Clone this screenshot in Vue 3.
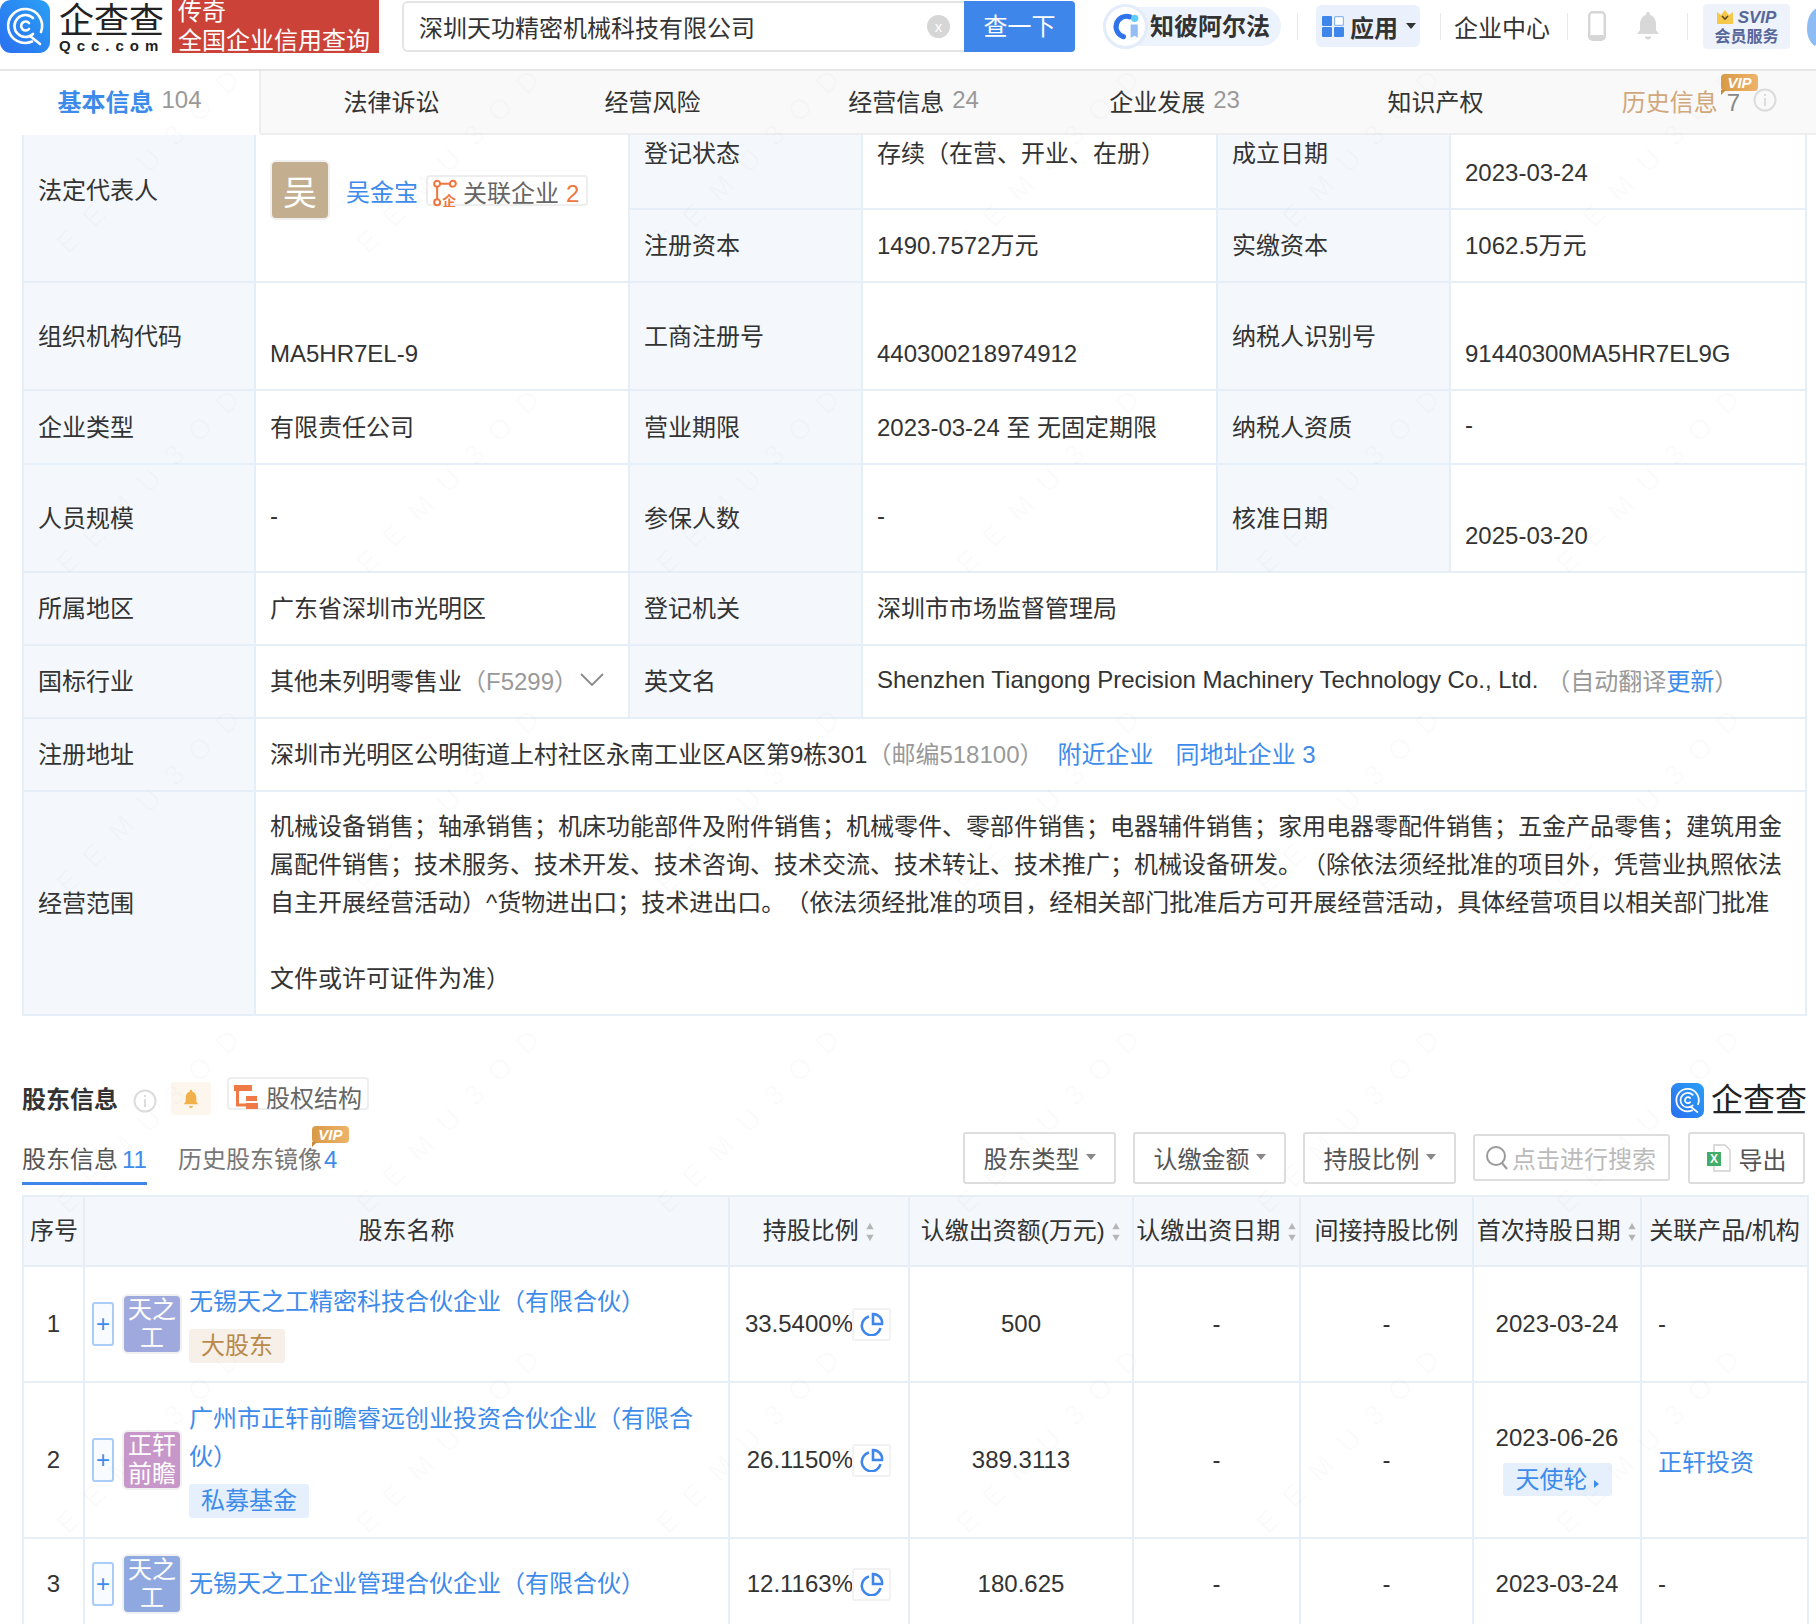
<script setup>
const watermarks = Array.from({ length: 30 }, (_, i) => i)

const tabs = [
  { name: '基本信息', count: '104', active: true },
  { name: '法律诉讼' },
  { name: '经营风险' },
  { name: '经营信息', count: '24' },
  { name: '企业发展', count: '23' },
  { name: '知识产权' }
]

const columns = [
  { title: '序号', cls: 'th-no' },
  { title: '股东名称' },
  { title: '持股比例', sort: true },
  { title: '认缴出资额(万元)', sort: true },
  { title: '认缴出资日期', sort: true },
  { title: '间接持股比例' },
  { title: '首次持股日期', sort: true },
  { title: '关联产品/机构' }
]

const holders = [
  {
    no: 1,
    avatar: ['天之', '工'],
    color: '#a0a9dd',
    name: '无锡天之工精密科技合伙企业（有限合伙）',
    tag: '大股东',
    tagCls: 'tag-gold',
    ratio: '33.5400%',
    amount: '500',
    date: '2023-03-24',
    height: 116
  },
  {
    no: 2,
    avatar: ['正轩', '前瞻'],
    color: '#c897c9',
    name: '广州市正轩前瞻睿远创业投资合伙企业（有限合伙）',
    tag: '私募基金',
    tagCls: 'tag-blue',
    ratio: '26.1150%',
    amount: '389.3113',
    date: '2023-06-26',
    round: '天使轮',
    product: '正轩投资',
    height: 156
  },
  {
    no: 3,
    avatar: ['天之', '工'],
    color: '#90a8e0',
    name: '无锡天之工企业管理合伙企业（有限合伙）',
    ratio: '12.1163%',
    amount: '180.625',
    date: '2023-03-24',
    height: 92
  }
]
</script>

<template>
  <div class="page">
    <header class="top">
      <svg class="logo" viewBox="0 0 50 53">
        <defs>
          <linearGradient id="qccBlue" x1="0" y1="1" x2="1" y2="0">
            <stop offset="0" stop-color="#2a6ff0" />
            <stop offset="1" stop-color="#2aa0f5" />
          </linearGradient>
        </defs>
        <rect width="50" height="53" rx="11" fill="url(#qccBlue)" />
        <g fill="none" stroke="#fff" stroke-width="2.6" stroke-linecap="round">
          <path d="M32 41.5A17 17 0 1 1 41 32" />
          <path d="M30 36L40 44" />
          <path d="M33 18A11 11 0 1 0 33 34" />
          <path d="M29 23A4.5 4.5 0 1 0 29 29" />
        </g>
      </svg>
      <div class="brand">
        <div class="brand-name">企查查</div>
        <div class="brand-en">Qcc.com</div>
      </div>
      <div class="slogan">
        <span>传奇</span>
        <span>全国企业信用查询</span>
      </div>
      <div class="search">
        <div class="search-input">
          <span class="search-text">深圳天功精密机械科技有限公司</span>
          <span class="clear">x</span>
        </div>
        <div class="search-btn">查一下</div>
      </div>
      <div class="alpha">
        <svg class="alpha-icon" viewBox="0 0 44 44">
          <circle cx="22" cy="22" r="20.5" fill="#fff" stroke="#e3ecfb" stroke-width="3" />
          <path d="M26 12.5A10 10 0 1 0 20 32" fill="none" stroke="#2f72ea" stroke-width="5" stroke-linecap="round" />
          <circle cx="31" cy="14" r="3.6" fill="#5ccdf6" />
          <path d="M27 20h7v13l-3-2-4 2z" fill="#93bdf5" />
        </svg>
        <span class="alpha-text">知彼阿尔法</span>
      </div>
      <i class="sep sep-a"></i>
      <div class="apps">
        <svg class="apps-icon" viewBox="0 0 22 21">
          <rect width="10" height="10" rx="1" fill="#3f86ea" />
          <rect x="12.6" y="0.6" width="8.8" height="8.8" rx="1" fill="#fff" stroke="#8db6f2" stroke-width="1.2" />
          <rect y="11" width="10" height="10" rx="1" fill="#3f86ea" />
          <rect x="12" y="11" width="10" height="10" rx="1" fill="#3f86ea" />
        </svg>
        <span class="apps-text">应用</span>
        <i class="caret caret-dark"></i>
      </div>
      <i class="sep sep-b"></i>
      <span class="center-link">企业中心</span>
      <i class="sep sep-c"></i>
      <svg class="phone" viewBox="0 0 18 30">
        <rect x="1.2" y="1.2" width="15.6" height="27.6" rx="3.5" fill="#fff" stroke="#d6d6d6" stroke-width="2.4" />
        <rect x="1" y="24" width="16" height="5" rx="2" fill="#d6d6d6" />
      </svg>
      <svg class="top-bell" viewBox="0 0 24 30">
        <path d="M12 1a2 2 0 0 1 2 2v1c4 1 6 5 6 9v6l3 4H1l3-4v-6c0-4 2-8 6-9V3a2 2 0 0 1 2-2z" fill="#d8d8d8" />
        <path d="M9 25.5a3 3 0 0 0 6 0z" fill="#d8d8d8" />
      </svg>
      <i class="sep sep-d"></i>
      <div class="svip">
        <div class="svip-line">
          <svg class="crown" viewBox="0 0 16 14">
            <path d="M0 2l4 3 4-5 4 5 4-3v12H0z" fill="#f5c84c" />
            <path d="M5 6l3 3 3-3" fill="none" stroke="#5a4a20" stroke-width="1.6" />
          </svg>
          <span>SVIP</span>
        </div>
        <div class="svip-sub">会员服务</div>
      </div>
      <svg class="helper" viewBox="0 0 30 46">
        <path d="M2 26C2 10 10 2 26 2v8c-10 0-15 6-15 16l5 8-6 9c-5-3-8-10-8-17z" fill="#8dbcf5" />
      </svg>
    </header>

    <nav class="tabs">
      <div v-for="tab in tabs" :key="tab.name" class="tab" :class="{ 'tab-on': tab.active }">
        <span class="tab-name">{{ tab.name }}</span>
        <span v-if="tab.count" class="tab-count">{{ tab.count }}</span>
      </div>
      <div class="tab tab-history">
        <span class="tab-name">历史信息</span>
        <span class="tab-count">7</span>
        <svg class="info info-tab" viewBox="0 0 24 24">
          <circle cx="12" cy="12" r="10.5" fill="none" stroke="#dcdcdc" stroke-width="2" />
          <rect x="11" y="10" width="2" height="8" fill="#dcdcdc" />
          <rect x="11" y="6" width="2" height="2" fill="#dcdcdc" />
        </svg>
        <span class="vip vip-tab">VIP</span>
      </div>
    </nav>

    <section class="basic">
      <div class="cell label span-2">
        <span class="label-up">法定代表人</span>
      </div>
      <div class="cell person span-2">
        <div class="person-row">
          <div class="person-avatar"><span>吴</span></div>
          <a class="link person-name">吴金宝</a>
          <div class="related">
            <svg class="related-icon" viewBox="0 0 26 30">
              <g fill="none" stroke="#ee7640" stroke-width="2.2">
                <circle cx="4.5" cy="5" r="3.2" />
                <circle cx="21.5" cy="5" r="3.2" />
                <circle cx="4.5" cy="25" r="3.2" />
                <path d="M8 5h10M4.5 8.5v13" />
              </g>
              <text x="10" y="29" font-size="15" font-weight="700" fill="#ee7640">企</text>
            </svg>
            <span>关联企业</span>
            <em>2</em>
          </div>
        </div>
      </div>
      <div class="cell label cell-up">登记状态</div>
      <div class="cell cell-up">存续（在营、开业、在册）</div>
      <div class="cell label cell-up">成立日期</div>
      <div class="cell cell-nudge">2023-03-24</div>

      <div class="cell label">注册资本</div>
      <div class="cell">1490.7572万元</div>
      <div class="cell label">实缴资本</div>
      <div class="cell">1062.5万元</div>

      <div class="cell label">组织机构代码</div>
      <div class="cell cell-down">MA5HR7EL-9</div>
      <div class="cell label">工商注册号</div>
      <div class="cell cell-down">440300218974912</div>
      <div class="cell label">纳税人识别号</div>
      <div class="cell cell-down">91440300MA5HR7EL9G</div>

      <div class="cell label">企业类型</div>
      <div class="cell">有限责任公司</div>
      <div class="cell label">营业期限</div>
      <div class="cell">2023-03-24 至 无固定期限</div>
      <div class="cell label">纳税人资质</div>
      <div class="cell">-</div>

      <div class="cell label">人员规模</div>
      <div class="cell">-</div>
      <div class="cell label">参保人数</div>
      <div class="cell">-</div>
      <div class="cell label">核准日期</div>
      <div class="cell cell-down">2025-03-20</div>

      <div class="cell label">所属地区</div>
      <div class="cell">广东省深圳市光明区</div>
      <div class="cell label">登记机关</div>
      <div class="cell wide-3">深圳市市场监督管理局</div>

      <div class="cell label">国标行业</div>
      <div class="cell">
        其他未列明零售业<span class="muted">（F5299）</span>
        <svg class="chevron" viewBox="0 0 24 14">
          <path d="M1 1l11 11L23 1" fill="none" stroke="#8a8a8a" stroke-width="1.8" />
        </svg>
      </div>
      <div class="cell label">英文名</div>
      <div class="cell wide-3">
        Shenzhen Tiangong Precision Machinery Technology Co., Ltd.
        <span class="muted en-note">（自动翻译<a class="link">更新</a>）</span>
      </div>

      <div class="cell label">注册地址</div>
      <div class="cell wide-5">
        深圳市光明区公明街道上村社区永南工业区A区第9栋301<span class="muted">（邮编518100）</span>
        <a class="link addr-near">附近企业</a>
        <a class="link addr-same">同地址企业 3</a>
      </div>

      <div class="cell label">经营范围</div>
      <div class="cell wide-5 scope">
        机械设备销售；轴承销售；机床功能部件及附件销售；机械零件、零部件销售；电器辅件销售；家用电器零配件销售；五金产品零售；建筑用金<br />
        属配件销售；技术服务、技术开发、技术咨询、技术交流、技术转让、技术推广；机械设备研发。（除依法须经批准的项目外，凭营业执照依法<br />
        自主开展经营活动）^货物进出口；技术进出口。（依法须经批准的项目，经相关部门批准后方可开展经营活动，具体经营项目以相关部门批准<br />
        <br />
        文件或许可证件为准）
      </div>
    </section>

    <section class="holders">
      <div class="holder-head">
        <h3 class="holder-title">股东信息</h3>
        <svg class="info info-title" viewBox="0 0 24 24">
          <circle cx="12" cy="12" r="10.5" fill="none" stroke="#dcdcdc" stroke-width="2" />
          <rect x="11" y="10" width="2" height="8" fill="#dcdcdc" />
          <rect x="11" y="6" width="2" height="2" fill="#dcdcdc" />
        </svg>
        <div class="bell-box">
          <svg viewBox="0 0 24 30">
            <path d="M12 1a2 2 0 0 1 2 2v1c4 1 6 5 6 9v6l3 4H1l3-4v-6c0-4 2-8 6-9V3a2 2 0 0 1 2-2z" fill="#f2b04a" />
            <path d="M9 25.5a3 3 0 0 0 6 0z" fill="#f2b04a" />
          </svg>
        </div>
        <div class="struct">
          <svg class="struct-icon" viewBox="0 0 24 24">
            <rect width="18" height="6" fill="#f07a45" />
            <path d="M3.5 6v14h9" fill="none" stroke="#f07a45" stroke-width="3" />
            <rect x="12" y="11" width="11" height="5" fill="#f07a45" />
            <rect x="12" y="18" width="12" height="6" fill="#f07a45" />
          </svg>
          <span>股权结构</span>
        </div>
        <div class="holder-brand">
          <svg class="holder-logo" viewBox="0 0 50 53">
            <rect width="50" height="53" rx="11" fill="url(#qccBlue)" />
            <g fill="none" stroke="#fff" stroke-width="2.6" stroke-linecap="round">
              <path d="M32 41.5A17 17 0 1 1 41 32" />
              <path d="M30 36L40 44" />
              <path d="M33 18A11 11 0 1 0 33 34" />
              <path d="M29 23A4.5 4.5 0 1 0 29 29" />
            </g>
          </svg>
          <span>企查查</span>
        </div>
      </div>

      <div class="holder-bar">
        <div class="sub-tab sub-tab-on">股东信息<b class="count-gap">11</b></div>
        <div class="sub-tab">
          历史股东镜像<b>4</b>
          <span class="vip vip-sub">VIP</span>
        </div>
        <div class="filters">
          <div class="filter">股东类型<i class="caret"></i></div>
          <div class="filter">认缴金额<i class="caret"></i></div>
          <div class="filter">持股比例<i class="caret"></i></div>
          <div class="finder">
            <svg viewBox="0 0 24 26">
              <circle cx="11" cy="11" r="9" fill="none" stroke="#999" stroke-width="2" />
              <path d="M17 18l5 6" stroke="#999" stroke-width="2" />
            </svg>
            <span>点击进行搜索</span>
          </div>
          <div class="export">
            <svg viewBox="0 0 24 28">
              <path d="M7 1h11l5 5v21H7z" fill="#fff" stroke="#cfcfcf" stroke-width="1.4" />
              <rect y="8" width="14" height="14" fill="#3fae6a" />
              <text x="3" y="19" font-size="12" font-weight="700" fill="#fff">X</text>
            </svg>
            <span>导出</span>
          </div>
        </div>
      </div>

      <table class="holder-table">
        <colgroup>
          <col style="width: 61px" />
          <col style="width: 645px" />
          <col style="width: 180px" />
          <col style="width: 224px" />
          <col style="width: 167px" />
          <col style="width: 173px" />
          <col style="width: 168px" />
          <col style="width: 167px" />
        </colgroup>
        <thead>
          <tr>
            <th v-for="col in columns" :key="col.title" :class="col.cls">
              {{ col.title }}
              <svg v-if="col.sort" class="sort" viewBox="0 0 10 22">
                <path d="M5 1l4 7H1z" fill="#b5b5b5" />
                <path d="M5 21l4-7H1z" fill="#b5b5b5" />
              </svg>
            </th>
          </tr>
        </thead>
        <tbody>
          <tr v-for="row in holders" :key="row.no" :style="{ height: row.height + 'px' }">
            <td class="center">{{ row.no }}</td>
            <td>
              <div class="holder-cell">
                <span class="plus">+</span>
                <span class="holder-avatar" :style="{ background: row.color }">
                  <span v-for="line in row.avatar" :key="line">{{ line }}</span>
                </span>
                <div class="holder-info">
                  <a class="link">{{ row.name }}</a>
                  <div v-if="row.tag" class="holder-tag" :class="row.tagCls">{{ row.tag }}</div>
                </div>
              </div>
            </td>
            <td>
              <div class="ratio">
                <span>{{ row.ratio }}</span>
                <span class="pie">
                  <svg viewBox="0 0 24 24">
                    <path d="M9 4.5A9.5 9.5 0 1 0 20.5 16" fill="none" stroke="#3f86ea" stroke-width="2.6" />
                    <path d="M13 2a9 9 0 0 1 9 10h-9z" fill="none" stroke="#3f86ea" stroke-width="2.6" />
                  </svg>
                </span>
              </div>
            </td>
            <td class="center">{{ row.amount }}</td>
            <td class="center">-</td>
            <td class="center">-</td>
            <td class="center">
              <div>{{ row.date }}</div>
              <div v-if="row.round" class="round">{{ row.round }}<i></i></div>
            </td>
            <td class="product">
              <a v-if="row.product" class="link">{{ row.product }}</a>
              <template v-else>-</template>
            </td>
          </tr>
        </tbody>
      </table>
    </section>

    <div class="watermark">
      <span v-for="n in watermarks" :key="n">E E M U 3 O D</span>
    </div>
  </div>
</template>

<style>
html,
body {
  margin: 0;
  background: #fff;
}
</style>

<style scoped>
.page {
  position: relative;
  width: 1816px;
  height: 1624px;
  overflow: hidden;
  background: #fff;
  color: #333;
  font-family: "Liberation Sans", "Noto Sans CJK SC", sans-serif;
  font-size: 24px;
  text-spacing-trim: space-all;
}

.link {
  color: #3d8beb;
  text-decoration: none;
}

.muted {
  color: #999;
}

/* top bar */
.top {
  display: flex;
  align-items: center;
  box-sizing: border-box;
  height: 71px;
  padding-bottom: 17px;
  border-bottom: 2px solid #e6e6e6;
  white-space: nowrap;
}

.top > * {
  flex: none;
}

.logo {
  width: 50px;
  height: 53px;
}

.brand {
  width: 105px;
  margin-left: 9px;
  text-align: center;
}

.brand-name {
  padding-top: 3px;
  font-size: 35px;
  line-height: 36px;
  color: #222;
}

.brand-en {
  font-size: 15px;
  line-height: 14px;
  font-weight: 700;
  letter-spacing: 6px;
  color: #222;
}

.slogan {
  display: flex;
  flex-direction: column;
  justify-content: flex-end;
  box-sizing: border-box;
  width: 207px;
  height: 53px;
  margin-left: 8px;
  padding-left: 6px;
  overflow: hidden;
  background: #cb4239;
  color: #fff;
  line-height: 29px;
}

.slogan span {
  flex: none;
}

.slogan span:last-child {
  margin-bottom: -2px;
}

.search {
  display: flex;
  width: 673px;
  height: 51px;
  margin-left: 23px;
}

.search-input {
  display: flex;
  flex: 1;
  align-items: center;
  justify-content: space-between;
  padding: 0 14px 0 15px;
  border: 2px solid #e4e4e4;
  border-right: 0;
  border-radius: 6px 0 0 6px;
}

.clear {
  display: flex;
  align-items: center;
  justify-content: center;
  width: 23px;
  height: 23px;
  border-radius: 50%;
  background: #d6d6d6;
  color: #fff;
  font-size: 15px;
}

.search-btn {
  width: 111px;
  border-radius: 0 4px 4px 0;
  background: #3f86ea;
  color: #fff;
  line-height: 51px;
  text-align: center;
}

.alpha {
  position: relative;
  width: 178px;
  height: 39px;
  margin-left: 28px;
  border-radius: 20px;
  background: #edf3fd;
}

.alpha-icon {
  position: absolute;
  top: -3px;
  left: 0;
  width: 45px;
  height: 45px;
}

.alpha-text {
  margin-left: 47px;
  font-weight: 700;
  line-height: 39px;
}

.sep {
  width: 1px;
  height: 27px;
  background: #e8e8e8;
}

.sep-a {
  margin-left: 16px;
}

.sep-b {
  margin-left: 20px;
}

.sep-c {
  margin-left: 17px;
}

.sep-d {
  margin-left: 27px;
}

.apps {
  display: flex;
  align-items: center;
  width: 104px;
  height: 42px;
  margin-left: 18px;
  border-radius: 6px;
  background: #eaf1fc;
}

.apps-icon {
  width: 22px;
  height: 21px;
  margin-left: 6px;
}

.apps-text {
  margin-left: 6px;
  font-weight: 700;
}

.caret {
  display: inline-block;
  margin-left: 6px;
  border-top: 6px solid #888;
  border-right: 5px solid transparent;
  border-left: 5px solid transparent;
}

.caret-dark {
  margin-left: 8px;
  border-top-color: #333;
}

.center-link {
  margin-left: 13px;
}

.phone {
  width: 18px;
  height: 30px;
  margin-left: 20px;
}

.top-bell {
  width: 24px;
  height: 30px;
  margin-left: 30px;
}

.svip {
  box-sizing: border-box;
  width: 87px;
  height: 45px;
  margin-left: 15px;
  padding-top: 5px;
  border-radius: 4px;
  background: #eef2fb;
  color: #57679a;
  font-weight: 700;
  text-align: center;
}

.svip-line {
  display: flex;
  align-items: center;
  justify-content: center;
  gap: 5px;
  font-size: 17px;
  font-style: italic;
  line-height: 17px;
}

.crown {
  width: 16px;
  height: 14px;
}

.svip-sub {
  margin-top: 1px;
  font-size: 16px;
  line-height: 20px;
}

.helper {
  width: 30px;
  height: 46px;
  margin-left: 15px;
}

/* main tabs */
.tabs {
  display: flex;
  height: 64px;
  overflow: hidden;
  background: #f9f9f9;
  white-space: nowrap;
}

.tab {
  position: relative;
  display: flex;
  flex: none;
  align-items: center;
  justify-content: center;
  box-sizing: border-box;
  width: 261px;
  padding-bottom: 4px;
  border-bottom: 2px solid #eeeeee;
}

.tab-on {
  border-right: 2px solid #eeeeee;
  border-bottom-color: #fff;
  background: #fff;
}

.tab-on .tab-name {
  color: #3d8beb;
  font-weight: 700;
}

.tab-count {
  margin-left: 8px;
  color: #999;
}

.tab-history .tab-name {
  color: #d1a87c;
}

.tab-history .tab-count {
  margin: 5px 0 0 9px;
  color: #888;
}

.tab-history {
  padding-left: 6px;
}

.info {
  width: 24px;
  height: 24px;
}

.info-tab {
  margin-left: 13px;
}

.vip {
  position: absolute;
  box-sizing: border-box;
  width: 37px;
  height: 17px;
  border-radius: 4px;
  background: linear-gradient(90deg, #d99a45, #eeb36a);
  color: #fff;
  font-size: 15px;
  font-style: italic;
  font-weight: 700;
  line-height: 17px;
  text-align: center;
}

.vip::after {
  content: "";
  position: absolute;
  top: 16px;
  left: 0;
  border-top: 5px solid #c98a38;
  border-right: 5px solid transparent;
}

.vip-tab {
  top: 3px;
  left: 155px;
}

.vip-sub {
  top: -16px;
  left: 134px;
}

/* basic info grid */
.basic {
  display: grid;
  grid-template-columns: 230px 372px 231px 353px 231px 354px;
  grid-template-rows: 73px 71px 106px 72px 106px 71px 71px 71px 222px;
  gap: 2px;
  width: 1785px;
  box-sizing: border-box;
  margin-left: 22px;
  padding: 0 2px 2px;
  background: #e6eff7;
}

.cell {
  display: flex;
  align-items: center;
  box-sizing: border-box;
  padding: 0 14px 4px;
  background: #fff;
  white-space: nowrap;
}

.label {
  background: #f4f8fc;
}

.span-2 {
  grid-row: span 2;
}

.wide-3 {
  grid-column: span 3;
}

.wide-5 {
  grid-column: span 5;
}

.cell-up {
  padding-bottom: 40px;
}

.cell-down {
  padding-top: 36px;
  padding-bottom: 0;
}

.cell-nudge {
  padding-top: 2px;
  padding-bottom: 0;
}

.label-up {
  margin-bottom: 36px;
}

.person {
  align-items: flex-start;
}

.person-row {
  display: flex;
  align-items: center;
  margin-top: 25px;
}

.person-avatar {
  display: flex;
  align-items: center;
  justify-content: center;
  width: 56px;
  height: 56px;
  border: 2px solid #f0f0f0;
  border-radius: 6px;
  background: #c4ae90;
  color: #fff;
  font-size: 34px;
}

.person-name {
  margin-left: 16px;
}

.related {
  display: flex;
  align-items: center;
  box-sizing: border-box;
  width: 162px;
  height: 31px;
  margin-left: 8px;
  padding: 6px 0 0 5px;
  border: 2px solid #eeeeee;
  border-radius: 4px;
  color: #666;
  line-height: 27px;
}

.related span {
  margin-left: 6px;
  flex: none;
}

.related em {
  margin-left: 7px;
  color: #ee7640;
  font-style: normal;
}

.related-icon {
  flex: none;
  width: 24px;
  height: 28px;
}

.chevron {
  width: 24px;
  height: 14px;
  margin-left: 2px;
}

.en-note {
  margin-left: 8px;
}

.addr-near {
  margin-left: 14px;
}

.addr-same {
  margin-left: 22px;
}

.scope {
  display: block;
  padding-top: 16px;
  padding-bottom: 0;
  line-height: 38px;
}

/* shareholders */
.holders {
  padding: 0 9px 0 22px;
}

.holder-head {
  display: flex;
  align-items: flex-start;
  height: 41px;
  margin-top: 61px;
}

.holder-title {
  margin: 6px 0 0;
  font-size: 24px;
  font-weight: 700;
  line-height: 34px;
}

.info-title {
  margin: 12px 0 0 15px;
}

.bell-box {
  display: flex;
  align-items: center;
  justify-content: center;
  width: 40px;
  height: 33px;
  margin: 5px 0 0 14px;
  border-radius: 3px;
  background: #fdf6ec;
}

.bell-box svg {
  width: 16px;
  height: 20px;
}

.struct {
  display: flex;
  align-items: center;
  box-sizing: border-box;
  width: 142px;
  height: 33px;
  margin-left: 16px;
  padding: 11px 0 0 5px;
  border: 2px solid #eeeeee;
  border-radius: 4px;
  color: #666;
}

.struct-icon {
  flex: none;
  width: 24px;
  height: 24px;
  margin-top: -5px;
}

.struct span {
  flex: none;
  margin-left: 8px;
  line-height: 26px;
}

.holder-brand {
  display: flex;
  align-items: center;
  margin: 6px 0 0 auto;
  color: #222;
  font-size: 32px;
  line-height: 35px;
}

.holder-logo {
  width: 35px;
  height: 35px;
  margin-right: 6px;
}

.holder-bar {
  display: flex;
  align-items: flex-start;
  height: 77px;
}

.sub-tab {
  position: relative;
  margin: 24px 31px 0 0;
  padding-bottom: 4px;
  color: #777;
  line-height: 36px;
}

.sub-tab b {
  margin-left: 2px;
  color: #3d8beb;
  font-weight: 400;
}

.sub-tab .count-gap {
  margin-left: 4px;
}

.sub-tab-on {
  border-bottom: 3px solid #3f86ea;
  color: #555;
}

.filters {
  display: flex;
  align-items: flex-start;
  margin: 14px 0 0 auto;
  padding-right: 2px;
}

.filter {
  display: flex;
  align-items: center;
  justify-content: center;
  box-sizing: border-box;
  width: 153px;
  height: 52px;
  margin-right: 17px;
  padding-bottom: 2px;
  border: 2px solid #dddddd;
  border-radius: 3px;
  color: #555;
}

.finder {
  display: flex;
  align-items: center;
  box-sizing: border-box;
  width: 197px;
  height: 47px;
  margin: 2px 18px 0 0;
  padding-left: 10px;
  border: 2px solid #dddddd;
  border-radius: 3px;
  color: #bbb;
}

.finder svg {
  flex: none;
  width: 24px;
  height: 26px;
  margin-right: 3px;
}

.finder span {
  white-space: nowrap;
}

.export {
  display: flex;
  align-items: center;
  justify-content: center;
  box-sizing: border-box;
  width: 117px;
  height: 52px;
  border: 2px solid #dddddd;
  border-radius: 3px;
  color: #555;
}

.export svg {
  width: 24px;
  height: 28px;
  margin-right: 8px;
}

.holder-table {
  width: 1785px;
  table-layout: fixed;
  border-collapse: collapse;
  font-size: 24px;
}

.holder-table th,
.holder-table td {
  padding: 0;
  border: 2px solid #e6eff7;
}

.holder-table th {
  height: 70px;
  padding-bottom: 5px;
  box-sizing: border-box;
  background: #f4f8fc;
  font-weight: 400;
  text-align: center;
  white-space: nowrap;
}

.holder-table .th-no {
  padding-left: 6px;
  text-align: left;
}

.sort {
  width: 10px;
  height: 20px;
  vertical-align: -3px;
}

.center {
  text-align: center;
}

.holder-cell {
  display: flex;
  align-items: center;
  padding: 0 24px 0 7px;
}

.plus {
  flex: none;
  box-sizing: border-box;
  width: 22px;
  height: 44px;
  border: 2px solid #a9cdf7;
  border-radius: 3px;
  background: #f8fbff;
  color: #3d8beb;
  line-height: 40px;
  text-align: center;
}

.holder-avatar {
  display: flex;
  flex: none;
  flex-direction: column;
  align-items: center;
  justify-content: center;
  width: 56px;
  height: 56px;
  margin-left: 8px;
  border: 2px solid #f0f0f0;
  border-radius: 6px;
  color: #fff;
  line-height: 28px;
}

.holder-info {
  flex: 1;
  margin-left: 7px;
  line-height: 38px;
}

.holder-tag {
  width: fit-content;
  margin: 8px 0 3px;
  padding: 0 12px;
  border-radius: 3px;
  line-height: 34px;
}

.tag-gold {
  background: #f7f0e8;
  color: #b98a4a;
}

.tag-blue {
  background: #e5f0fc;
  color: #3d8beb;
}

.ratio {
  display: flex;
  align-items: center;
  justify-content: flex-end;
  padding-right: 17px;
}

.pie {
  display: flex;
  align-items: center;
  justify-content: center;
  box-sizing: border-box;
  width: 39px;
  height: 33px;
  margin-left: -1px;
  border: 2px solid #f2f2f2;
  border-radius: 3px;
}

.pie svg {
  width: 24px;
  height: 24px;
}

.round {
  width: 109px;
  height: 33px;
  margin: 11px auto 0;
  border-radius: 3px;
  background: #e5f0fc;
  color: #3d8beb;
  line-height: 33px;
}

.round i {
  display: inline-block;
  margin-left: 6px;
  border-top: 4px solid transparent;
  border-bottom: 4px solid transparent;
  border-left: 5px solid #3d8beb;
}

.product {
  padding-left: 16px !important;
}

/* faint tiled watermark over the page */
.watermark {
  position: absolute;
  top: 0;
  left: 0;
  display: grid;
  grid-template-columns: repeat(6, 300px);
  grid-auto-rows: 320px;
  align-items: center;
  justify-items: center;
  pointer-events: none;
}

.watermark span {
  color: rgba(130, 130, 130, 0.04);
  font-size: 28px;
  letter-spacing: 5px;
  transform: rotate(-45deg);
  white-space: nowrap;
}
</style>
